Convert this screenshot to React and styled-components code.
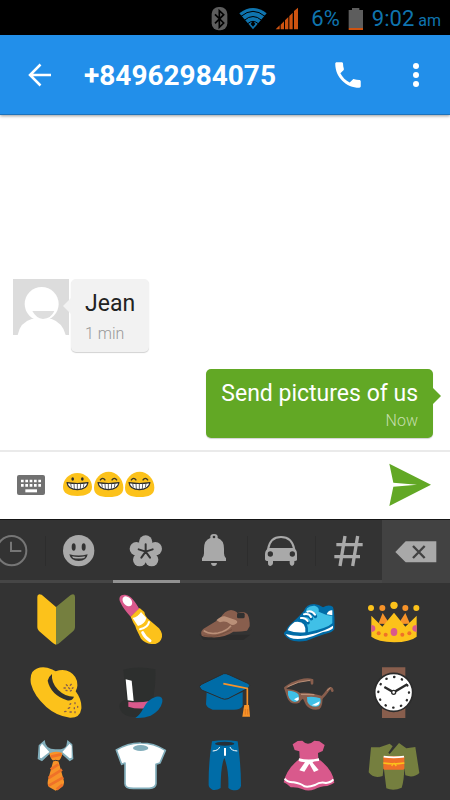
import styled, { createGlobalStyle } from 'styled-components';

const GlobalStyle = createGlobalStyle`
  * {
    box-sizing: border-box;
  }

  body {
    margin: 0;
    background: #fff;
    font-family: Roboto, "Liberation Sans", sans-serif;
  }

  button {
    padding: 0;
    border: 0;
    background: none;
    color: inherit;
    font: inherit;
    cursor: pointer;
  }

  svg {
    display: block;
    flex: none;
  }
`;

const Screen = styled.div`
  display: flex;
  flex-direction: column;
  height: 100vh;
  overflow: hidden;
`;

const StatusBar = styled.div`
  display: flex;
  align-items: center;
  justify-content: flex-end;
  gap: 8px;
  height: 35px;
  padding: 2px 9px 0 0;
  background: #000;
  color: #0f74ae;
  font-size: 22px;
`;

const Clock = styled.time`
  display: flex;
  align-items: baseline;
  gap: 4px;
`;

const Meridiem = styled.span`
  font-size: 16px;
`;

const Header = styled.header`
  position: relative;
  display: flex;
  align-items: center;
  height: 80px;
  padding: 1px 0 0 20px;
  background: #228fea;
  border-bottom: 1px solid #1c72bb;
  box-shadow: 0 1px 3px rgba(0, 0, 0, 0.4);
  color: #fff;
`;

const HeaderButton = styled.button`
  display: flex;
  align-items: center;
  justify-content: center;
  width: ${props => props.$width}px;
  height: 48px;
`;

const Title = styled.h1`
  flex: 1;
  margin: 0 0 0 24px;
  font-size: 28px;
  font-weight: 700;
`;

const Conversation = styled.main`
  flex: 1;
  display: flex;
  flex-direction: column;
  justify-content: flex-end;
  gap: 17px;
  min-height: 0;
  padding: 0 17px 12px 13px;
`;

const Message = styled.div`
  display: flex;
  align-items: flex-start;
  gap: 2px;
  justify-content: ${props => (props.$sent ? 'flex-end' : 'flex-start')};
`;

const Bubble = styled.div`
  position: relative;
  padding: ${props => (props.$sent ? '9px 15px 5px' : '9px 14px 6px')};
  border-radius: 5px;
  background: ${props => (props.$sent ? '#62a825' : '#f2f2f2')};
  color: ${props => (props.$sent ? '#fff' : '#222')};
  box-shadow: 0 1px 1px rgba(0, 0, 0, 0.18);

  &::after {
    content: '';
    position: absolute;
    top: 19px;
    border: 8px solid transparent;
    ${props => (props.$sent
    ? 'left: 100%; border-left-color: #62a825; border-right-width: 0;'
    : 'right: 100%; border-right-color: #f2f2f2; border-left-width: 0;')}
  }
`;

const Text = styled.p`
  margin: 0;
  font-size: 23px;
  line-height: 31px;
`;

const Time = styled.p`
  margin: ${props => (props.$sent ? '0' : '3px 0 0')};
  color: ${props => (props.$sent ? '#c5dfac' : '#999')};
  font-size: 16px;
  font-weight: 300;
  line-height: 24px;
  text-align: ${props => (props.$sent ? 'right' : 'left')};
`;

const Composer = styled.form`
  display: flex;
  align-items: center;
  height: 69px;
  padding: 0 19px 2px 17px;
  border-top: 2px solid #eaeaea;
  background: #fff;
`;

const Field = styled.label`
  flex: 1;
  display: flex;
  align-items: center;
  min-width: 0;
  margin-left: 17px;
`;

const TextInput = styled.input`
  flex: 1;
  min-width: 0;
  border: 0;
  outline: 0;
  background: none;
  font: inherit;
  font-size: 23px;
`;

const TabBar = styled.div`
  display: flex;
  height: 64px;
  border-top: 1px solid #151515;
  background: #333;
`;

const TabScroller = styled.div`
  flex: 1;
  min-width: 0;
  overflow: hidden;
`;

const Tabs = styled.div`
  display: flex;
  height: 100%;
  margin-left: -22px;
`;

const Tab = styled.button`
  position: relative;
  flex: 1;
  display: flex;
  align-items: center;
  justify-content: center;
  border-bottom: 3px solid ${props => (props.$active ? '#929292' : '#464646')};

  & + &::before {
    content: '';
    position: absolute;
    left: 0;
    top: 16px;
    bottom: 14px;
    border-left: 1px solid #2d2d2d;
  }
`;

const DeleteButton = styled.button`
  display: flex;
  align-items: center;
  justify-content: center;
  width: 68px;
  background: #424242;
`;

const EmojiPanel = styled.div`
  display: grid;
  grid-template-columns: repeat(5, 1fr);
  grid-auto-rows: 73px;
  height: 217px;
  padding: 0 14px;
  overflow: hidden;
  background: #333;
`;

const EmojiButton = styled.button`
  display: flex;
  align-items: center;
  justify-content: center;
`;

const Emoji = ({ label, x, y, children }) => (
  <EmojiButton type="button" aria-label={label}>
    <svg width="52" height="52" viewBox={`${x} ${y} 156 156`}>{children}</svg>
  </EmojiButton>
);

const TabIcon = ({ x, children }) => (
  <svg width="36" height="36" viewBox={`${x} 51 108 108`} fill="#a9a9a9">{children}</svg>
);

const Face = ({ smiling }) => (
  <svg width="31" height="31" viewBox="0 0 93 93">
    <path
      fill="#fcc21b"
      d={smiling
        ? 'M47 8C70 8 91 29 91 56C91 77 75 84 47 84S3 77 3 56C3 29 23 8 47 8Z'
        : 'M46 12C70 12 90 31 90 54C90 73 73 81 46 81S3 73 3 54C3 31 22 12 46 12Z'}
    />
    <path fill="#fff" stroke="#2f2f2f" strokeWidth="3.5" strokeLinejoin="round" d="M15 41Q46 46 78 41Q74 62 46 62T15 41Z" />
    <path stroke="#444" strokeWidth="2.5" fill="none" d="M26 43L28 55M36 44L37 60M46 44V61M56 44L55 60M66 43L64 55" />
    {smiling
      ? <path fill="none" stroke="#3c3527" strokeWidth="4" d="M21 34Q29 22 37 34M56 34Q64 22 72 34" />
      : <g fill="#2f2f2f"><ellipse cx="32" cy="30" rx="4" ry="5" /><ellipse cx="61" cy="30" rx="4" ry="5" /></g>}
  </svg>
);

const StatusIcons = () => (
  <>
    <svg width="20" height="26" viewBox="48 14 60 78">
      <rect x="50" y="17" width="47" height="70" rx="21" fill="#5d5d5d" />
      <path d="M60 39L86 65L73 78V28L86 40L60 66" fill="none" stroke="#000" strokeWidth="5" />
    </svg>
    <svg width="28" height="24" viewBox="131 14 84 72">
      <path fill="#0f74ae" d="M132 33Q173 1 214 33L173 81Z" />
      <path fill="none" stroke="#000" strokeWidth="3" d="M137 42Q173 12 209 42M147 54Q173 31 199 54M156 65Q173 49 190 65" />
      <path fill="#000" d="M173 56L180 65L173 73L166 65Z" />
    </svg>
    <svg width="28" height="24" viewBox="240 13 84 72" fill="#cf5310">
      <path d="M242 80L254 68V80ZM257 66L267 56V80H257ZM270 53L280 43V80H270ZM283 40L293 30V80H283ZM297 25L309 15V80H297Z" />
    </svg>
  </>
);

const ShoeEmojis = () => (
  <>
    <Emoji label="Beginner" x={30} y={26}>
      <path fill="#fcc21b" d="M52 34Q52 23 65 28L108 65V178Q102 177 96 171L57 137Q52 133 52 126Z" />
      <path fill="#757f3f" d="M108 65L151 30Q165 22 165 35V126Q165 132 160 137L121 171Q114 178 108 178Z" />
    </Emoji>
    <Emoji label="Lipstick" x={284} y={26}>
      <path fill="#d9598c" d="M300 51C293 36 301 26 317 29C332 32 344 48 357 71L331 94Q310 73 300 51Z" />
      <ellipse cx="321" cy="48" rx="12" ry="17" transform="rotate(-43 321 48)" fill="#fff" />
      <path fill="#fcc21b" d="M331 94L358 68L372 80Q372 88 381 99L416 129Q431 147 422 163Q413 178 393 176Q373 173 362 160L348 132Q347 123 339 112Z" />
      <path fill="#fff" d="M337 98Q353 95 362 80L378 98Q374 116 353 122Z" />
      <path fill="none" stroke="#fff" strokeWidth="6" strokeLinecap="round" d="M359 132Q383 126 386 110" />
      <path fill="none" stroke="#fff" strokeWidth="9" strokeLinecap="round" d="M367 142Q374 157 389 166" />
    </Emoji>
    <Emoji label="Shoe" x={27} y={26}>
      <path fill="#2c2c2c" d="M29 148L40 164H160L181 148Z" />
      <path fill="#885e4d" d="M35 151Q28 136 48 126L90 100Q104 75 123 74Q139 77 142 83Q161 75 172 86Q180 100 179 123L171 136Q148 140 130 139Q103 158 65 156Q43 156 35 151Z" />
      <path fill="#ba9078" d="M79 105Q94 91 104 93L137 104Q147 110 137 116Q127 122 119 115Q106 105 90 111Z" />
      <path fill="none" stroke="#ba9078" strokeWidth="5" d="M41 136Q57 148 84 143Q110 137 123 121" />
      <path fill="none" stroke="#74503f" strokeWidth="3" d="M41 151Q70 156 91 148L126 133" />
      <rect x="141" y="82" width="23" height="17" rx="5" fill="#303030" />
    </Emoji>
    <Emoji label="Sneaker" x={280} y={26}>
      <path fill="#006ca7" d="M283 146Q282 139 290 136Q291 126 309 111Q329 93 342 78Q350 56 373 56Q388 57 400 66Q417 56 430 65Q436 86 434 132Q425 143 408 145Q379 154 351 166Q299 175 283 146Z" />
      <path fill="#40c0e7" d="M352 69Q360 60 375 61Q390 65 387 79L398 84Q412 92 428 91V114Q414 128 355 141Q357 113 340 100Z" />
      <path fill="#fff" d="M294 135Q297 123 315 110Q350 104 347 141Q317 144 294 135ZM288 146Q333 157 365 147Q409 136 430 121V129Q419 139 400 140Q371 153 348 159Q300 167 288 146ZM411 87Q416 74 428 75V90Z" />
      <path fill="none" stroke="#006ca7" strokeWidth="11" strokeLinecap="round" d="M335 102Q349 100 355 112M344 91Q360 88 365 100M354 83Q368 79 377 93" />
      <path fill="none" stroke="#fff" strokeWidth="6" strokeLinecap="round" d="M334 98Q348 96 354 107M343 87Q359 84 364 95M353 79Q367 75 376 88" />
    </Emoji>
    <Emoji label="Crown" x={533} y={26}>
      <path fill="#f79329" d="M564 115L577 83L598 116ZM624 116L645 83L659 115Z" />
      <path fill="#fcc21b" d="M543 91L576 124L611 82L645 124L679 91V154Q660 170 611 171Q562 169 543 154Z" />
      <g fill="#d9598c"><ellipse cx="611" cy="140" rx="10" ry="12" /><path d="M543 119Q554 119 555 129T543 140ZM679 119Q667 119 666 129T679 140Z" /></g>
      <g fill="#f79329"><circle cx="576" cy="68" r="9" /><circle cx="645" cy="68" r="9" /></g>
      <g fill="#fcc21b"><circle cx="542" cy="68" r="9" /><circle cx="611" cy="60" r="11" /><circle cx="678" cy="68" r="9" /></g>
      <g fill="#ef7128"><circle cx="565" cy="144" r="6" /><circle cx="586" cy="148" r="6" /><circle cx="636" cy="148" r="6" /><circle cx="657" cy="144" r="6" /></g>
    </Emoji>
  </>
);

const HatEmojis = () => (
  <>
    <Emoji label="Sun hat" x={31} y={35}>
      <path fill="#fcc21b" d="M38 50Q53 32 83 37Q100 42 108 48Q132 39 151 50Q173 63 173 88Q174 97 168 108Q187 133 185 160Q181 188 151 187Q112 183 80 155Q43 121 34 86Q30 63 38 50Z" />
      <path fill="#303030" d="M97 56Q85 66 84 76Q93 118 142 135Q157 138 163 124Q136 124 115 103Q94 82 97 56Z" />
      <g stroke="#885e4d" strokeWidth="4" strokeLinecap="round" fill="none">
        <path d="M140 88l3 3M155 87l-3 3M133 98h4M147 97l3 3M160 97l-2 2M139 105l3 1M155 105l-3 2" />
        <path d="M166 142v3M153 145l-2 2M150 157l-4 2M164 157v3M174 153v3M135 169l4-1M151 170h4M166 169v3" />
      </g>
    </Emoji>
    <Emoji label="Top hat" x={284} y={35}>
      <path fill="#2d2f2e" d="M309 43Q353 30 405 42Q407 84 399 128L354 184Q304 188 297 154Q296 139 318 132Z" />
      <path fill="#fff" d="M316 72L334 76L340 137L322 135Z" />
      <path fill="#d9598c" d="M324 139Q353 144 393 136L378 159Q346 162 324 154Z" />
      <path fill="#006ca7" d="M345 188Q361 177 369 159Q381 132 407 124Q429 121 426 140Q421 165 391 181Q368 190 345 188Z" />
    </Emoji>
    <Emoji label="Graduation cap" x={537} y={35}>
      <path fill="#006ca7" d="M560 111L617 131L668 110V151Q662 163 641 163H578Q561 158 558 147Z" />
      <path fill="#006ca7" stroke="#2d2d2d" strokeWidth="3" d="M538 94Q543 86 553 83L611 55Q617 53 629 59L686 85Q693 91 685 98L624 130Q614 134 604 129L545 104Z" />
      <path fill="none" stroke="#f79329" strokeWidth="5" d="M610 85L682 99V151" />
      <path fill="#f79329" d="M673 149H687L690 184H667L671 159Z" />
      <path stroke="#d96c1a" strokeWidth="2" d="M676 161V178M683 161V178" />
    </Emoji>
    <Emoji label="Glasses" x={70} y={35}>
      <path fill="none" stroke="#885e4d" strokeWidth="8" strokeLinecap="round" d="M77 98Q95 83 121 76Q145 70 157 75V84M184 130Q197 116 206 103Q215 93 218 106" />
      <path fill="none" stroke="#ba9078" strokeWidth="3" d="M84 94Q116 77 151 75M202 106L212 97" />
      <path fill="#885e4d" d="M74 100Q105 101 121 113Q137 110 164 116L188 122Q191 151 179 162Q153 167 139 149L130 130Q124 133 119 142Q93 151 83 128Z" />
      <path fill="#40c0e7" d="M85 106Q106 106 116 117Q124 139 106 140Q90 137 85 119ZM142 125Q164 122 182 129Q186 145 176 153Q152 158 143 139Z" />
      <path fill="#fff" d="M103 132L116 125Q120 136 111 136ZM156 150L180 138Q179 151 169 151Z" />
      <path stroke="#ba9078" strokeWidth="4" d="M124 117L164 118" />
    </Emoji>
    <Emoji label="Watch" x={323} y={35}>
      <path fill="#885e4d" d="M365 36H435V188H365Z" />
      <circle cx="400" cy="111" r="57" fill="#fff" stroke="#2b2b2b" strokeWidth="5" />
      <circle cx="400" cy="111" r="46" fill="none" stroke="#2b2b2b" strokeWidth="7" strokeDasharray="1 23.09" strokeLinecap="round" />
      <path fill="none" stroke="#2b2b2b" strokeWidth="7" d="M372 95L400 111L441 87" />
      <circle cx="400" cy="111" r="6" fill="#fff" stroke="#2b2b2b" strokeWidth="4" />
    </Emoji>
  </>
);

const ClothesEmojis = () => (
  <>
    <Emoji label="Necktie" x={31} y={29}>
      <path fill="#82aebb" d="M75 29L57 45L54 86L67 93L89 72H127L150 93L161 86L158 42L143 29L140 46Q135 58 109 57Q77 58 75 29Z" />
      <path fill="#fff" d="M67 40L89 65L65 84L61 82V49ZM150 40L128 65L150 84L156 82V47Z" />
      <path fill="#f79329" d="M89 69Q107 60 128 68Q125 88 116 91L132 149Q136 163 126 170L108 181L87 169Q82 163 85 149L101 91Q93 88 89 69Z" />
      <path stroke="#ef7128" strokeWidth="8" d="M93 117L116 102M87 143L127 118M87 166L131 141M111 177L129 163M94 79L125 72" />
      <path stroke="#333" strokeWidth="3" fill="none" d="M99 92Q108 88 118 92" />
    </Emoji>
    <Emoji label="T-shirt" x={284} y={29}>
      <path fill="#fff" stroke="#82aebb" strokeWidth="5" strokeLinejoin="round" d="M288 59Q324 37 362 38Q400 38 435 60L419 98L407 102V160Q406 173 387 174H339Q314 174 314 160V98L304 102Z" />
      <ellipse cx="361" cy="53" rx="23" ry="9" fill="#82aebb" />
    </Emoji>
    <Emoji label="Jeans" x={537} y={29}>
      <path fill="#006ca7" d="M576 33Q613 27 653 33L656 56Q663 115 663 166Q660 179 646 180Q632 180 625 172Q627 120 613 82Q602 107 602 173Q590 181 577 178Q566 172 566 164Q565 98 576 33Z" />
      <ellipse cx="614" cy="40" rx="29" ry="6" fill="#263039" />
      <path fill="none" stroke="#fff" strokeWidth="3" d="M578 62Q595 61 599 50M652 62Q633 61 630 50" />
      <path fill="#fff" d="M612 53H618V76H612Z" />
    </Emoji>
    <Emoji label="Dress" x={790} y={29}>
      <path fill="#d9598c" d="M834 32L848 31Q864 49 884 31L899 33L915 44L909 62L895 68L896 85Q941 119 944 157Q935 162 923 167Q900 168 885 177Q865 184 849 177Q832 169 813 171Q804 161 792 156Q800 116 840 85L839 63L825 59L819 42Z" />
      <path fill="none" stroke="#fff" strokeWidth="6" d="M795 145Q804 157 822 156Q844 160 854 168Q867 171 886 164Q902 153 919 158Q935 156 941 147" />
      <path fill="#fff" d="M838 84Q867 91 898 84V92Q878 93 879 97L897 119L883 125L869 100L854 124L839 120L856 96Q843 94 837 92Z" />
    </Emoji>
    <Emoji label="Kimono" x={1043} y={29}>
      <path fill="#757f3f" d="M1052 51L1078 51L1108 40L1117 48L1104 67L1108 71L1136 38L1158 54L1185 50L1197 128Q1180 144 1155 135L1152 113Q1151 152 1144 172Q1120 183 1098 174L1090 110L1087 137Q1059 146 1045 126Z" />
      <rect x="1089" y="77" width="63" height="41" rx="4" fill="#ef7128" />
      <path fill="none" stroke="#fff" strokeWidth="5" d="M1090 79Q1120 83 1151 79" />
      <path fill="none" stroke="#fcc21b" strokeWidth="4" d="M1089 98Q1119 103 1152 98M1120 98L1114 107M1121 98L1128 107" />
    </Emoji>
  </>
);

const Keyboard = () => (
  <section aria-label="Emoji keyboard">
    <TabBar>
      <TabScroller>
        <Tabs>
          <Tab type="button" aria-label="Recent">
            <TabIcon x={-19}>
              <circle cx="34" cy="107" r="44" fill="none" stroke="#767676" strokeWidth="6" />
              <path fill="none" stroke="#767676" strokeWidth="6" d="M32 80V108H63" />
            </TabIcon>
          </Tab>
          <Tab type="button" aria-label="Smileys">
            <TabIcon x={183}>
              <circle cx="236" cy="107" r="47" />
              <g fill="#333"><ellipse cx="221" cy="96" rx="6" ry="11" /><ellipse cx="251" cy="96" rx="6" ry="11" /></g>
              <path fill="#333" d="M208 118Q236 125 263 118Q260 138 236 138T208 118Z" />
              <path d="M216 124Q236 128 256 124L253 129Q236 132 219 129Z" />
            </TabIcon>
          </Tab>
          <Tab type="button" aria-label="Objects" $active>
            <TabIcon x={385}>
              <circle cx="438" cy="81" r="20" />
              <circle cx="467" cy="101" r="20" />
              <circle cx="456" cy="134" r="20" />
              <circle cx="420" cy="134" r="20" />
              <circle cx="410" cy="101" r="20" />
              <circle cx="438" cy="110" r="26" />
              <path stroke="#333" strokeWidth="6" strokeLinecap="round" d="M438 110V88M438 110L459 103M438 110L451 128M438 110L425 128M438 110L417 103" />
            </TabIcon>
          </Tab>
          <Tab type="button" aria-label="Notifications">
            <TabIcon x={587}>
              <path d="M605 138V130Q611 125 611 115V101Q611 75 630 69Q628 57 641 57T652 69Q671 75 671 101V115Q671 125 677 130V138ZM632 144H650Q649 153 641 153T632 144Z" />
              <circle cx="641" cy="66" r="4" fill="#333" />
            </TabIcon>
          </Tab>
          <Tab type="button" aria-label="Travel">
            <TabIcon x={114}>
              <path fill="none" stroke="#a9a9a9" strokeWidth="6" d="M129 103Q135 66 168 66T208 103" />
              <path d="M132 99H205Q216 103 216 117V134Q216 138 208 138V145Q207 153 201 153T194 145V138H144V145Q143 153 136 153T129 145V138Q120 138 120 132V117Q121 103 132 99Z" />
              <g fill="#333"><circle cx="136" cy="117" r="8" /><circle cx="202" cy="117" r="8" /></g>
            </TabIcon>
          </Tab>
          <Tab type="button" aria-label="Symbols">
            <TabIcon x={316}>
              <path fill="none" stroke="#a9a9a9" strokeWidth="10" d="M361 63L346 153M399 63L384 153M335 89H414M329 125H406" />
            </TabIcon>
          </Tab>
        </Tabs>
      </TabScroller>
      <DeleteButton type="button" aria-label="Delete">
        <svg width="42" height="24" viewBox="509 71 126 72">
          <path fill="#a9a9a9" d="M510 107L541 75H633V138H541Z" />
          <path stroke="#424242" strokeWidth="7" d="M563 89L598 125M598 89L563 125" />
        </svg>
      </DeleteButton>
    </TabBar>
    <EmojiPanel>
      <ShoeEmojis />
      <HatEmojis />
      <ClothesEmojis />
    </EmojiPanel>
  </section>
);

const App = () => (
  <>
    <GlobalStyle />
    <Screen>
      <StatusBar>
        <StatusIcons />
        <span>6%</span>
        <svg width="16" height="24" viewBox="448 15 48 72">
          <path fill="#5d5d5d" d="M460 18H482V24H493V78H450V24H460Z" />
          <path fill="#cf5310" d="M450 78H493V84H450Z" />
        </svg>
        <Clock>9:02<Meridiem>am</Meridiem></Clock>
      </StatusBar>

      <Header>
        <HeaderButton type="button" aria-label="Back" $width={40}>
          <svg width="24" height="24" viewBox="0 0 24 24" fill="none" stroke="#fff" strokeWidth="2.5">
            <path d="M23 12H3M12.5 1.5L2 12L12.5 22.5" />
          </svg>
        </HeaderButton>
        <Title>+84962984075</Title>
        <HeaderButton type="button" aria-label="Call" $width={68}>
          <svg width="34" height="34" viewBox="0 0 24 24" fill="#fff">
            <path d="M6.62 10.79c1.44 2.83 3.76 5.14 6.59 6.59l2.2-2.2c.27-.27.67-.36 1.02-.24 1.12.37 2.33.57 3.57.57.55 0 1 .45 1 1V20c0 .55-.45 1-1 1-9.39 0-17-7.61-17-17 0-.55.45-1 1-1h3.5c.55 0 1 .45 1 1 0 1.25.2 2.45.57 3.57.11.35.03.74-.25 1.02l-2.2 2.2z" />
          </svg>
        </HeaderButton>
        <HeaderButton type="button" aria-label="More options" $width={68}>
          <svg width="8" height="24" viewBox="0 0 8 24" fill="#fff">
            <circle cx="4" cy="3" r="3" />
            <circle cx="4" cy="12" r="3" />
            <circle cx="4" cy="21" r="3" />
          </svg>
        </HeaderButton>
      </Header>

      <Conversation>
        <Message>
          <svg width="56" height="56" viewBox="39 27 168 168" role="img" aria-label="Contact">
            <path fill="#dcdcdc" d="M39 27H207V195H39Z" />
            <circle cx="125" cy="102" r="51" fill="#fff" />
            <path fill="#fff" d="M53 195Q60 157 95 147H155Q188 158 197 195Z" />
            <path fill="#dedede" d="M97 123H163Q153 146 129 147Q108 144 97 123Z" />
          </svg>
          <Bubble>
            <Text>Jean</Text>
            <Time>1 min</Time>
          </Bubble>
        </Message>
        <Message $sent>
          <Bubble $sent>
            <Text>Send pictures of us</Text>
            <Time $sent>Now</Time>
          </Bubble>
        </Message>
      </Conversation>

      <Composer onSubmit={event => event.preventDefault()}>
        <button type="button" aria-label="Show keyboard">
          <svg width="28" height="20" viewBox="0 0 84 60">
            <rect width="84" height="60" rx="6" fill="#717171" />
            <path stroke="#fff" strokeWidth="8" strokeDasharray="8 5" d="M12 18H73M12 31H73" />
            <path fill="#fff" d="M25 43H60V52H25Z" />
          </svg>
        </button>
        <Field>
          <Face />
          <Face smiling />
          <Face smiling />
          <TextInput type="text" aria-label="Message" />
        </Field>
        <button type="submit" aria-label="Send">
          <svg width="42" height="44" viewBox="566 305 126 132">
            <path fill="#62a825" d="M567 307L692 370L567 434L579 376L650 370L579 364Z" />
          </svg>
        </button>
      </Composer>

      <Keyboard />
    </Screen>
  </>
);

export default App;
